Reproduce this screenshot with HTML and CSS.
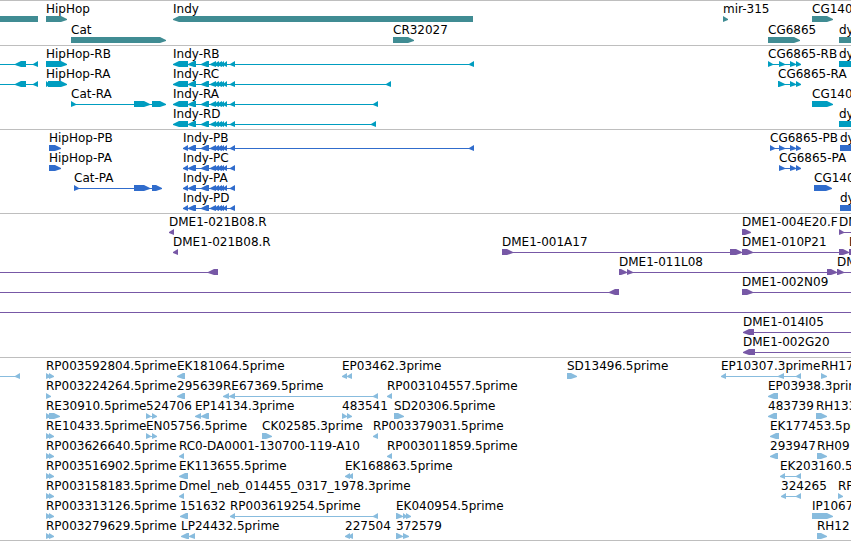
FILE: index.html
```
<!DOCTYPE HTML>
<html lang="en">
<head>
    <meta charset="utf-8">
    <meta name="viewport" content="width=device-width, initial-scale=1">
    <title>Genome Browser - Region View</title>
    <link rel="stylesheet" href="styles.css">
</head>
<body>
    <main class="browser">
        <section class="track track-genes" id="genes" aria-label="Genes"></section>
        <section class="track track-transcripts" id="transcripts" aria-label="Transcripts"></section>
        <section class="track track-cds" id="cds" aria-label="Coding sequences"></section>
        <section class="track track-bacs" id="bacs" aria-label="BAC ends"></section>
        <section class="track track-ests" id="ests" aria-label="ESTs"></section>
    </main>
    <script src="tracks.js"></script>
</body>
</html>
```
FILE: styles.css
```
/* Base styles */
body {
    margin: 0;
    background-color: #fff;
    color: #000;
    font-family: "DejaVu Sans", sans-serif;
    font-size: 12px;
    line-height: 14px;
}

/* Tracks */
.browser {
    overflow: hidden;
    border-bottom: 1px solid #bebebe;
}
.track {
    padding: 1px 0 2px;
    border-top: 1px solid #bebebe;
}
.track-genes,
.track-ests {
    padding-bottom: 1px;
}
.row {
    position: relative;
    height: 20px;
    padding-top: 14px;
    box-sizing: border-box;
}
.track-genes .row {
    height: 21px;
}

/* Features are placed by their position on the sequence */
.label {
    position: absolute;
    top: 0;
    white-space: nowrap;
}
.glyphs {
    display: block;
    width: 100%;
    height: 6px;
    overflow: visible;
    fill: currentColor;
}

/* Track colours */
.track-genes .glyphs { color: #408c93; }
.track-transcripts .glyphs { color: #009dc0; }
.track-cds .glyphs { color: #306ccc; }
.track-bacs .glyphs { color: #7758a6; }
.track-ests .glyphs { color: #88bcde; }
```
FILE: tracks.js
```
// One array per row. Feature: [label, strand, exons]
const INDY = [[188, 196], [201, 209], [210, 216], [214, 219], [217, 222], [220, 224], [223, 227], [230, 235]];
const EST_PAIR = [[46, 51], [49, 54]];
const EDGE = 2000;

const tracks = {
    genes: [
        [
            ['', '-', [[-20, 38]]],
            ['HipHop', '+', [[46, 67]]],
            ['Indy', '-', [[173, 473]]],
            ['mir-315', '+', [[723, 728]]],
            ['CG140', '+', [[812, 833]]]
        ],
        [
            ['Cat', '+', [[71, 166]]],
            ['CR32027', '+', [[393, 414]]],
            ['CG6865', '+', [[768, 800]]],
            ['dy', '+', [[839, EDGE]]]
        ]
    ],
    transcripts: [
        [
            ['', '-', [[-20, -10], [15, 26], [33, 38]]],
            ['HipHop-RB', '+', [[46, 67]]],
            ['Indy-RB', '-', [[173, 188], ...INDY, [469, 474]]],
            ['CG6865-RB', '+', [[768, 773], [779, 785], [790, 796], [796, 801]]],
            ['dy', '+', [[839, EDGE]]]
        ],
        [
            ['', '-', [[-20, -10], [15, 26], [33, 38]]],
            ['HipHop-RA', '+', [[46, 50], [48, 67]]],
            ['Indy-RC', '-', [[173, 188], ...INDY, [386, 391]]],
            ['CG6865-RA', '+', [[778, 785], [790, 796], [796, 801]]]
        ],
        [
            ['Cat-RA', '+', [[71, 76], [134, 150], [152, 166]]],
            ['Indy-RA', '-', [[173, 188], ...INDY, [373, 378]]],
            ['CG140', '+', [[812, 833]]]
        ],
        [
            ['Indy-RD', '-', [[173, 188], ...INDY, [371, 376]]],
            ['dy', '+', [[839, EDGE]]]
        ]
    ],
    cds: [
        [
            ['HipHop-PB', '+', [[49, 61]]],
            ['Indy-PB', '-', [[183, 188], ...INDY, [469, 474]]],
            ['CG6865-PB', '+', [[770, 775], [779, 785], [790, 796], [796, 801]]],
            ['dy', '+', [[840, EDGE]]]
        ],
        [
            ['HipHop-PA', '+', [[49, 61]]],
            ['Indy-PC', '-', [[183, 188], ...INDY]],
            ['CG6865-PA', '+', [[779, 785], [790, 796], [796, 801]]]
        ],
        [
            ['Cat-PA', '+', [[74, 79], [134, 150], [152, 162]]],
            ['Indy-PA', '-', [[183, 188], ...INDY]],
            ['CG140', '+', [[814, 832]]]
        ],
        [
            ['Indy-PD', '-', [[183, 188], ...INDY]],
            ['dy', '+', [[840, EDGE]]]
        ]
    ],
    bacs: [
        [
            ['DME1-021B08.R', '-', [[169, 174]]],
            ['DME1-004E20.F', '+', [[742, 751]]],
            ['DM', '+', [[839, 844], [EDGE, EDGE + 10]]]
        ],
        [
            ['DME1-021B08.R', '-', [[173, 178]]],
            ['DME1-001A17', '+', [[502, 513], [730, 742]]],
            ['DME1-010P21', '+', [[742, 753], [839, 849]]],
            ['D', '+', [[849, 860]]]
        ],
        [
            ['', '-', [[-20, -10], [208, 218]]],
            ['DME1-011L08', '+', [[619, 627], [627, 633], [827, 837]]],
            ['DM', '+', [[837, 844], [EDGE, EDGE + 10]]]
        ],
        [
            ['', '-', [[-20, -10], [609, 619]]],
            ['DME1-002N09', '+', [[742, 753], [EDGE, EDGE + 10]]]
        ],
        [
            ['', '-', [[-20, -10], [EDGE, EDGE + 10]]]
        ],
        [
            ['DME1-014I05', '-', [[743, 754], [EDGE, EDGE + 10]]]
        ],
        [
            ['DME1-002G20', '-', [[743, 755], [EDGE, EDGE + 10]]]
        ]
    ],
    ests: [
        [
            ['', '-', [[-20, -10], [15, 20]]],
            ['RP003592804.5prime', '+', EST_PAIR],
            ['EK181064.5prime', '-', [[177, 185]]],
            ['EP03462.3prime', '-', [[342, 347], [347, 352]]],
            ['SD13496.5prime', '+', [[567, 577]]],
            ['EP10307.3prime', '-', [[721, 726], [778, 784], [796, 801]]],
            ['RH17', '+', [[821, 827]]]
        ],
        [
            ['RP003224264.5prime', '+', [[46, 51]]],
            ['295639', '-', [[177, 185]]],
            ['RE67369.5prime', '-', [[223, 229], [229, 235], [373, 378]]],
            ['RP003104557.5prime', '-', [[387, 392]]],
            ['EP03938.3prime', '-', [[768, 778]]]
        ],
        [
            ['RE30910.5prime', '+', [[46, 51], [49, 60]]],
            ['524706', '+', [[146, 151], [152, 157]]],
            ['EP14134.3prime', '-', [[195, 201], [201, 209]]],
            ['483541', '+', [[342, 347], [347, 352]]],
            ['SD20306.5prime', '+', [[394, 404]]],
            ['483739', '-', [[768, 777]]],
            ['RH133', '+', [[816, 827]]]
        ],
        [
            ['RE10433.5prime', '+', EST_PAIR],
            ['EN05756.5prime', '+', [[146, 151], [152, 157]]],
            ['CK02585.3prime', '+', [[262, 272]]],
            ['RP003379031.5prime', '-', [[373, 378]]],
            ['EK177453.5prime', '-', [[770, 779]]]
        ],
        [
            ['RP003626640.5prime', '+', EST_PAIR],
            ['RC0-DA0001-130700-119-A10', '-', [[179, 184]]],
            ['RP003011859.5prime', '-', [[387, 392]]],
            ['293947', '-', [[770, 778]]],
            ['RH09', '+', [[817, 827]]]
        ],
        [
            ['RP003516902.5prime', '+', EST_PAIR],
            ['EK113655.5prime', '-', [[179, 188]]],
            ['EK168863.5prime', '-', [[345, 350], [348, 353]]],
            ['EK203160.5prime', '-', [[780, 785], [796, 801]]]
        ],
        [
            ['RP003158183.5prime', '+', EST_PAIR],
            ['Dmel_neb_014455_0317_1978.3prime', '-', [[179, 184]]],
            ['324265', '-', [[781, 786], [796, 801]]],
            ['RP', '+', [[838, 843]]]
        ],
        [
            ['RP003313126.5prime', '+', EST_PAIR],
            ['151632', '-', [[180, 188]]],
            ['RP003619254.5prime', '-', [[230, 235], [373, 378]]],
            ['EK040954.5prime', '+', [[396, 403], [403, 407], [406, 411]]],
            ['IP1067', '+', [[812, 833]]]
        ],
        [
            ['RP003279629.5prime', '+', EST_PAIR],
            ['LP24432.5prime', '-', [[181, 189], [189, 195]]],
            ['227504', '-', [[345, 350], [348, 353]]],
            ['372579', '+', [[396, 403], [403, 409]]],
            ['RH12', '+', [[817, 827]]]
        ]
    ]
};

// Box with a pointed end, short exons become a plain triangle
function exonPath(start, end, strand) {
    const tip = Math.min(end - start, 6);
    if (strand === '+') {
        return `M${start} 0H${end - tip}L${end} 3V4L${end - tip} 6H${start}Z`;
    }
    return `M${end} 0H${start + tip}L${start} 3V4L${start + tip} 6H${end}Z`;
}

function featurePath(strand, exons) {
    const first = exons[0][0];
    const last = exons[exons.length - 1][1];
    const intron = exons.length > 1 ? `<path d="M${first} 3H${last}V4H${first}Z"/>` : '';
    return intron + exons.map(([start, end]) => `<path d="${exonPath(start, end, strand)}"/>`).join('');
}

function renderRow(features) {
    const labels = features
        .filter(([label]) => label)
        .map(([label, , exons]) => `<span class="label" style="left: ${exons[0][0]}px">${label}</span>`);
    const glyphs = features.map(([, strand, exons]) => featurePath(strand, exons));
    return `<div class="row">${labels.join('')}<svg class="glyphs" aria-hidden="true">${glyphs.join('')}</svg></div>`;
}

Object.entries(tracks).forEach(([id, rows]) => {
    document.getElementById(id).innerHTML = rows.map(renderRow).join('');
});
```
